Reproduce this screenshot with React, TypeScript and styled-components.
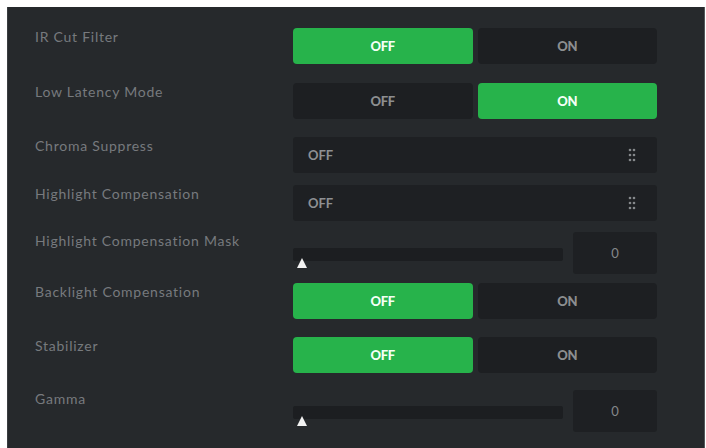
import React from 'react';
import styled, {createGlobalStyle} from 'styled-components';

const GlobalStyle = createGlobalStyle`
  html, body {
    margin: 0;
    padding: 0;
    background: #ffffff;
    overflow: hidden;
  }
  body {
    font-family: Lato, "Noto Sans", sans-serif;
  }
`;

type Setting =
  | {label: string; kind: 'toggle'; on: boolean; h: number}
  | {label: string; kind: 'select'; value: string; h: number}
  | {label: string; kind: 'slider'; value: number; h: number};

const settings: Setting[] = [
  {label: 'IR Cut Filter', kind: 'toggle', on: false, h: 55},
  {label: 'Low Latency Mode', kind: 'toggle', on: true, h: 54},
  {label: 'Chroma Suppress', kind: 'select', value: 'OFF', h: 48},
  {label: 'Highlight Compensation', kind: 'select', value: 'OFF', h: 47},
  {label: 'Highlight Compensation Mask', kind: 'slider', value: 0, h: 51},
  {label: 'Backlight Compensation', kind: 'toggle', on: false, h: 54},
  {label: 'Stabilizer', kind: 'toggle', on: false, h: 53},
  {label: 'Gamma', kind: 'slider', value: 0, h: 58},
];

const Dots = () => (
  <svg width="8" height="14" viewBox="0 0 8 14">
    {[2, 7, 12].map((y) =>
      [2, 6].map((x) => <circle key={`${x}-${y}`} cx={x} cy={y} r="1.3" fill="#85888b" />)
    )}
  </svg>
);

const App = () => {
  return (
    <>
      <GlobalStyle />
      <Panel>
        {settings.map((s) => (
          <Row key={s.label} $h={s.h}>
            <Label>{s.label}</Label>
            {s.kind === 'toggle' && (
              <Toggle>
                <Seg $active={!s.on}>OFF</Seg>
                <Seg $active={s.on}>ON</Seg>
              </Toggle>
            )}
            {s.kind === 'select' && (
              <Select>
                <span>{s.value}</span>
                <Dots />
              </Select>
            )}
            {s.kind === 'slider' && (
              <SliderWrap>
                <Track>
                  <Thumb />
                </Track>
                <ValueBox>{s.value}</ValueBox>
              </SliderWrap>
            )}
          </Row>
        ))}
      </Panel>
    </>
  );
};

export default App;

const Panel = styled.div`
  margin: 7px 1px 0 7px;
  height: 460px;
  box-sizing: border-box;
  background: #26292c;
  border-left: 1px solid #3a3d40;
  border-right: 1px solid #55585b;
  padding: 21px 0 0 27px;
  display: flex;
  flex-direction: column;
`;

const Row = styled.div<{$h: number}>`
  display: grid;
  grid-template-columns: 258px 364px;
  align-items: start;
  height: ${(p) => p.$h}px;
`;

const Label = styled.div`
  color: #777a7e;
  font-size: 14px;
  line-height: 16px;
  padding-top: 1px;
  letter-spacing: 0.75px;
`;

const Toggle = styled.div`
  display: grid;
  grid-template-columns: 1fr 1fr;
  gap: 5px;
  height: 36px;
`;

const Seg = styled.div<{$active: boolean}>`
  display: flex;
  align-items: center;
  justify-content: center;
  border-radius: 4px;
  background: ${(p) => (p.$active ? '#27b34b' : '#1d1f22')};
  color: ${(p) => (p.$active ? '#f4fff6' : '#8c8e90')};
  font-size: 13px;
  font-weight: 900;
  letter-spacing: -0.3px;
`;

const Select = styled.div`
  display: flex;
  align-items: center;
  justify-content: space-between;
  height: 36px;
  box-sizing: border-box;
  padding: 0 21px 0 15px;
  background: #1e2023;
  border-radius: 3px;
  color: #8e9093;
  font-size: 13px;
  font-weight: 700;
`;

const SliderWrap = styled.div`
  display: flex;
  align-items: center;
  gap: 10px;
  height: 42px;
`;

const Track = styled.div`
  position: relative;
  flex: 1;
  height: 13px;
  margin-top: 2px;
  background: #1c1e21;
  border-radius: 2px;
`;

const Thumb = styled.div`
  position: absolute;
  left: 4px;
  top: 10px;
  width: 0;
  height: 0;
  border-left: 5.5px solid transparent;
  border-right: 5.5px solid transparent;
  border-bottom: 10px solid #f2f2f2;
`;

const ValueBox = styled.div`
  width: 84px;
  height: 42px;
  display: flex;
  align-items: center;
  justify-content: center;
  background: #1e2023;
  border-radius: 3px;
  color: #85878a;
  font-size: 13px;
`;
